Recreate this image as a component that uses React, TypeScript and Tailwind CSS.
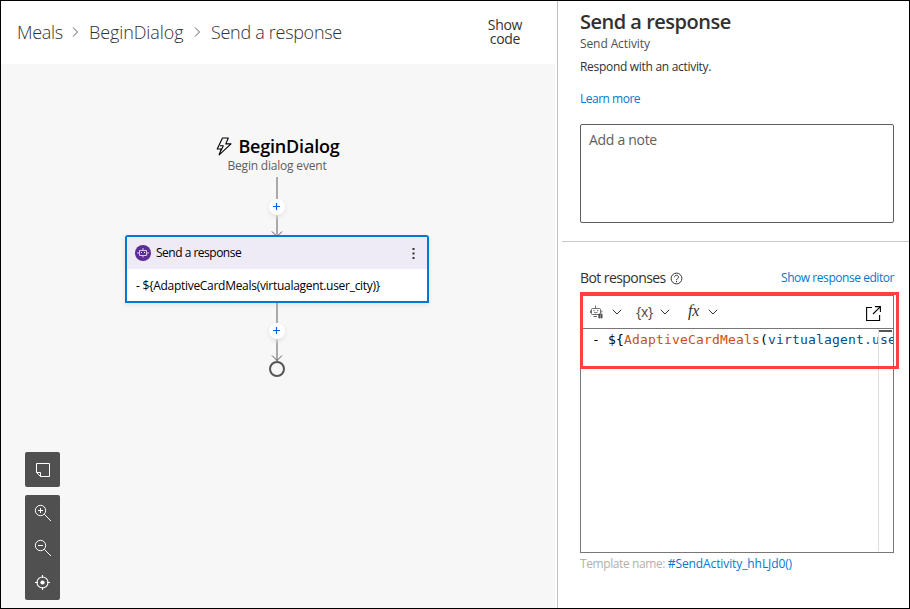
import type { ReactNode } from "react";

function Crumb({ children, className }: { children: ReactNode; className: string }) {
  return <span className={`whitespace-nowrap text-[18px] leading-6 font-light text-[#323130] ${className}`}>{children}</span>;
}

function CrumbArrow() {
  return (
    <svg width="8" height="12" viewBox="0 0 8 12" className="mt-px shrink-0" fill="none" stroke="#605e5c">
      <path d="M1 1.5 5.5 6 1 10.5" />
    </svg>
  );
}

function Connector({ className }: { className: string }) {
  return (
    <div className={`flex h-[58px] flex-col items-center ${className}`}>
      <div className="relative w-[2px] flex-1 bg-[#a9a9a9]">
        <svg width="12" height="6" viewBox="0 0 12 6" className="absolute bottom-[var(--tip)] -left-[5px]" fill="none" stroke="#555">
          <path d="M1 .5 6 5.5 11 .5" />
        </svg>
        <div className="absolute -left-[7px] flex size-4 rounded-full bg-white pt-1 pl-[3px] shadow-[0_2px_4px_#e6dfe3] [top:var(--plus)]">
          <svg width="8" height="8" viewBox="0 0 8 8" stroke="#0062e8" strokeWidth="1.2">
            <path d="M4.5 0v7M1 3.5h7" />
          </svg>
        </div>
      </div>
    </div>
  );
}

function Chevron() {
  return (
    <svg width="10" height="6" viewBox="0 0 10 6" fill="none" stroke="#323130" strokeWidth="1">
      <path d="M.8 .8 5 5 9.2 .8" />
    </svg>
  );
}

function Canvas() {
  return (
    <main className="flex h-[544px] w-[554px] flex-col bg-[#f7f7f7]">
      <div className="flex w-[552px] flex-col items-center pt-[70px]">
        <div className="flex h-6 items-center gap-[6px] pl-[2px]">
          <svg width="16" height="19" viewBox="0 0 16 19" fill="none" stroke="#000" strokeWidth="1.1" strokeLinejoin="round">
            <path d="M6.5 1h5.8L9.8 6.9h5.2L3.2 17.8 5.2 12H1.2L6.5 1Z M3.9 8.8h3.4L4.8 14" />
          </svg>
          <span className="text-[18px] leading-6 font-semibold tracking-[-0.2px] text-black">BeginDialog</span>
        </div>
        <span className="text-[12px] leading-4 tracking-[-0.2px] text-[#605e5c]">Begin dialog event</span>
        <div className="h-[3px]" />
        <Connector className="[--plus:22px] [--tip:-2px]" />
        <section className="relative h-[68px] w-[304px] rounded-t-[3px] border-2 border-[#0078d4] bg-white shadow-[0_2px_4px_#e4e0e2]">
          <header className="flex h-8 items-center bg-[#eeeaf6] pl-2">
            <svg width="16" height="16" viewBox="0 0 16 16" fill="none">
              <circle cx="8" cy="8" r="8" fill="#5c2e91" />
              <path d="M8 3v2M4.5 5.5h7v5h-7zM3 7v2M13 7v2M8 10.5v2" stroke="#d8cbe8" />
              <path d="M6 7.5h1M9 7.5h1" stroke="#fff" />
            </svg>
            <span className="ml-[5px] text-[12px] leading-4 tracking-[-0.5px] text-black">Send a response</span>
            <svg width="3" height="11" viewBox="0 0 3 11" className="mr-3 ml-auto" fill="#323130">
              <path d="M.5 0h2v2h-2zM.5 4.5h2v2h-2zM.5 9h2v2h-2z" />
            </svg>
          </header>
          <p className="pt-px pl-[9px] text-[12px] leading-8 tracking-[-0.29px] whitespace-nowrap text-black">
            - $&#123;AdaptiveCardMeals(virtualagent.user_city)&#125;
          </p>
        </section>
        <Connector className="[--plus:20px] [--tip:0px]" />
        <div className="size-4 rounded-full border-2 border-[#555]" />
      </div>
      <div className="mt-auto mb-2 ml-6 flex w-[35px] flex-col gap-2">
        <button className="flex h-[35px] items-center justify-center rounded-[2px] bg-[#505050]">
          <svg width="16" height="16" viewBox="0 0 16 16" fill="none" stroke="#fff">
            <path d="M1.5 1.5h13v13h-9l-4-4zM1.5 10.5h4v4" />
          </svg>
        </button>
        <div className="flex h-[105px] flex-col rounded-[2px] bg-[#505050]">
          <button className="flex h-[35px] items-center justify-center">
            <svg width="18" height="18" viewBox="0 0 18 18" fill="none" stroke="#fff">
              <circle cx="6.5" cy="6.5" r="5.2" />
              <path d="M10.3 10.3 17 17M4 6.5h5M6.5 4v5" />
            </svg>
          </button>
          <button className="flex h-[35px] items-center justify-center">
            <svg width="18" height="18" viewBox="0 0 18 18" fill="none" stroke="#fff">
              <circle cx="6.5" cy="6.5" r="5.2" />
              <path d="M10.3 10.3 17 17M4 6.5h5" />
            </svg>
          </button>
          <button className="flex h-[35px] items-center justify-center">
            <svg width="15" height="15" viewBox="0 0 15 15" fill="none" stroke="#fff" strokeWidth="1.1">
              <circle cx="7.5" cy="7.5" r="5.5" />
              <circle cx="7.5" cy="7.5" r="2.1" fill="#fff" stroke="none" />
              <path d="M7.5 0v3M7.5 12v3M0 7.5h3M12 7.5h3" />
            </svg>
          </button>
        </div>
      </div>
    </main>
  );
}

function Editor() {
  return (
    <div className="relative mt-[7px] h-[258px] w-[314px] border border-[#797775]">
      <div className="flex h-[33px] items-center border-b border-[#797775] pl-[9px]">
        <svg width="14" height="14" viewBox="0 0 14 14" className="-mt-px" fill="none" stroke="#605e5c">
          <path d="M5.5 .5v3M2.5 3.5h7q1 0 1 1v4q0 1-1 1h-7q-1 0-1-1v-4q0-1 1-1zM.5 5.5v2.5M11.8 5.5v2M3.5 5.5h1.2M7 5.5h1.2M4 7.2q1.7 1.2 3.5 0M3.5 11.5h3.5" strokeWidth=".9" />
          <path d="M9.3 8.5v5M11.3 8.5v5M8 10h5M8 12h5" stroke="#323130" strokeWidth=".9" />
        </svg>
        <span className="ml-2 flex"><Chevron /></span>
        <span className="ml-[14px] w-[18px] text-[14px] leading-4 tracking-[-0.3px] text-[#484644]">&#123;x&#125;</span>
        <span className="ml-[6px] flex"><Chevron /></span>
        <span className="-mt-0.5 ml-[18px] w-[14px] font-['Liberation_Serif',serif] text-[16px] leading-4 tracking-[-0.2px] text-[#323130] italic">fx</span>
        <span className="ml-[6px] flex"><Chevron /></span>
        <svg width="15" height="15" viewBox="0 0 15 15" className="mt-0.5 mr-3 ml-auto" fill="none" stroke="#000" strokeWidth="1.1">
          <path d="M6 1.5H.6v13h13V9M9 .6h5.4V6M14.2 .8 7 8" />
        </svg>
      </div>
      <div className="relative flex h-[223px]">
        <code className="w-[312px] overflow-hidden pl-[11px] font-['DejaVu_Sans_Mono',monospace] text-[13px] leading-[22px] tracking-[0.17px] whitespace-pre text-black">
          {"- ${"}
          <span className="text-[#ca5010]">AdaptiveCardMeals</span>(<span className="text-[#004e8c]">virtualagent.use</span>
        </code>
        <div className="absolute top-0 right-0 h-[222px] w-[15px] border-l border-[#dddddd] pt-px pr-px">
          <div className="h-[2px] bg-[#555]" />
        </div>
      </div>
      <div className="pointer-events-none absolute -top-1 -left-px h-[77px] w-[319px] border-[3px] border-[#ff4040]" />
    </div>
  );
}

function Properties() {
  return (
    <aside className="flex w-[352px] flex-col border-l border-[#c0c0c0] text-[12px] leading-4">
      <div className="flex flex-col items-start pl-[22px]">
        <h1 className="mt-[7px] text-[20px] leading-7 font-semibold tracking-[-0.5px] text-[#323130]">Send a response</h1>
        <p className="tracking-[-0.1px] text-[#505050]">Send Activity</p>
        <p className="mt-[7px] tracking-[-0.3px] text-[#323130]">Respond with an activity.</p>
        <a className="mt-4 tracking-[-0.5px] text-[#0078d4]">Learn more</a>
        <div className="mt-[17px] h-[99px] w-[314px] rounded-[2px] border border-[#605e5c] px-2 pt-[5px] text-[14px] leading-5 tracking-[-0.3px] text-[#605e5c]">
          Add a note
        </div>
      </div>
      <hr className="mt-[18px] ml-1 border-t border-[#c8c8c8]" />
      <div className="flex flex-col pl-[22px]">
        <div className="mt-[26px] flex h-5 w-[314px] items-center">
          <span className="text-[14px] leading-5 tracking-[-0.57px] text-[#323130]">Bot responses</span>
          <svg width="13" height="13" viewBox="0 0 13 13" className="ml-1" fill="none" stroke="#323130">
            <circle cx="6.5" cy="6.5" r="5.4" />
            <path d="M4.5 5.2c0-2.6 4-2.6 4 0 0 1.4-2 1.4-2 3M6.5 9v1.2" />
          </svg>
          <a className="ml-auto tracking-[-0.45px] text-[#0078d4]">Show response editor</a>
        </div>
        <Editor />
        <p className="mt-[3px] whitespace-nowrap text-[#b3b0ad]">
          <span className="tracking-[-0.4px]">Template name: </span>
          <a className="tracking-[-0.1px] text-[#0078d4]">#SendActivity_hhLJd0()</a>
        </p>
      </div>
    </aside>
  );
}

export default function App() {
  return (
    <div className="flex h-[609px] w-[910px] overflow-hidden border border-black bg-white font-['Open_Sans',sans-serif]">
      <div className="flex w-[556px] shrink-0 flex-col">
        <header className="flex h-[63px] items-center pb-[2px]">
          <nav className="flex items-center pl-4">
            <Crumb className="w-[46px] tracking-[-0.3px]">Meals</Crumb>
            <span className="mx-[9px] flex"><CrumbArrow /></span>
            <Crumb className="w-[96px] tracking-[-0.1px]">BeginDialog</Crumb>
            <span className="mx-[9px] flex"><CrumbArrow /></span>
            <Crumb className="tracking-[-0.3px]">Send a response</Crumb>
          </nav>
          <button className="mr-[34px] ml-auto w-9 text-center text-[14px] leading-[14px] tracking-[-0.3px] text-[#323130]">Show code</button>
        </header>
        <Canvas />
      </div>
      <Properties />
    </div>
  );
}
